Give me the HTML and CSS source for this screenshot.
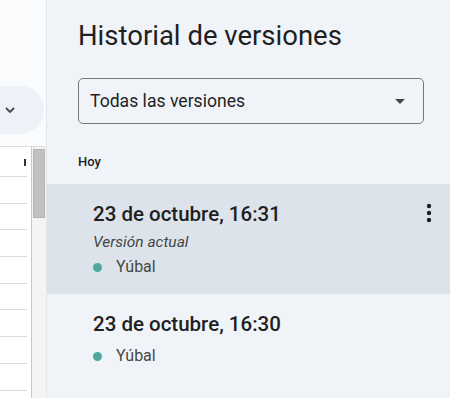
FILE: index.html
```html
<!DOCTYPE html>
<html lang="es">
<head>
    <meta charset="UTF-8">
    <meta name="viewport" content="width=device-width, initial-scale=1.0">
    <title>Historial de versiones</title>
    <link rel="stylesheet" href="styles.css">
</head>
<body>
    <div class="app">
        <!-- Sheet side, mostly cut off -->
        <div class="sheet">
            <div class="sheet-top">
                <div class="pill">
                    <svg class="chevron" width="10" height="7" viewBox="0 0 10 7">
                        <path d="M1 1l4 4 4-4" fill="none" stroke="#444746" stroke-width="1.8"/>
                    </svg>
                </div>
            </div>
            <div class="grid">
                <div class="cells">
                    <div class="cell"><span class="caret"></span></div>
                    <div class="cell"></div>
                    <div class="cell"></div>
                    <div class="cell"></div>
                    <div class="cell"></div>
                    <div class="cell"></div>
                    <div class="cell"></div>
                    <div class="cell"></div>
                    <div class="cell"></div>
                </div>
                <div class="scrollbar">
                    <div class="thumb"></div>
                </div>
            </div>
        </div>

        <!-- Version history panel -->
        <div class="panel">
            <h1>Historial de versiones</h1>
            <div class="select">
                <span>Todas las versiones</span>
                <span class="arrow"></span>
            </div>
            <div class="day">Hoy</div>

            <div class="version current">
                <div class="version-head">
                    <div class="version-date">23 de octubre, 16:31</div>
                    <svg class="kebab" width="6" height="20" viewBox="0 0 6 20">
                        <circle cx="3" cy="3" r="2.2" fill="#1f1f1f"/>
                        <circle cx="3" cy="10" r="2.2" fill="#1f1f1f"/>
                        <circle cx="3" cy="17" r="2.2" fill="#1f1f1f"/>
                    </svg>
                </div>
                <div class="version-label">Versión actual</div>
                <div class="author"><span class="dot"></span>Yúbal</div>
            </div>

            <div class="version">
                <div class="version-head">
                    <div class="version-date">23 de octubre, 16:30</div>
                </div>
                <div class="author spaced"><span class="dot"></span>Yúbal</div>
            </div>
        </div>
    </div>
</body>
</html>
```

FILE: styles.css
```css
body {
    margin: 0;
    font-family: Roboto, "Liberation Sans", Arial, sans-serif;
    color: #1f1f1f;
    overflow: hidden;
}

.app {
    display: flex;
    height: 398px;
}

/* Sheet side */
.sheet {
    width: 46px;
    flex-shrink: 0;
    background: #f9fbfd;
    border-right: 1px solid #e3e6ea;
    overflow: hidden;
}

.sheet-top {
    height: 147px;
    padding-top: 86px;
    box-sizing: border-box;
    border-bottom: 1px solid #dadce0;
}

.pill {
    width: 70px;
    height: 48px;
    margin-left: -26px;
    border-radius: 24px;
    background: #eef2f8;
    display: flex;
    align-items: center;
    padding-left: 31px;
    box-sizing: border-box;
}

.grid {
    display: flex;
    height: 251px;
    background: #fff;
}

.cells {
    width: 31px;
    border-right: 1px solid #c7c7c7;
}

.cell {
    height: 26.7px;
    border-bottom: 1px solid #dadada;
    margin-right: 4px;
    box-sizing: border-box;
    position: relative;
}

.cell:first-child {
    height: 30px;
}

.caret {
    position: absolute;
    left: 24px;
    top: 12px;
    width: 2px;
    height: 7px;
    background: #333;
}

.scrollbar {
    flex: 1;
    background: #f4f4f4;
    padding: 2px 1px 0 1px;
}

.thumb {
    height: 69px;
    background: #c1c1c1;
    border: 1px solid #b4b4b4;
    box-sizing: border-box;
}

/* Panel */
.panel {
    flex: 1;
    background: #f0f4f9;
}

h1 {
    margin: 19px 0 0 31px;
    font-size: 27.5px;
    font-weight: 400;
    line-height: 34px;
    color: #1f1f1f;
}

.select {
    margin: 25px 26px 0 31px;
    height: 46px;
    border: 1px solid #747775;
    border-radius: 5px;
    display: flex;
    align-items: center;
    justify-content: space-between;
    padding: 0 18px 0 11px;
    box-sizing: border-box;
    font-size: 17.6px;
    color: #1f1f1f;
}

.arrow {
    width: 0;
    height: 0;
    border-left: 5px solid transparent;
    border-right: 5px solid transparent;
    border-top: 5px solid #444746;
}

.day {
    margin: 30px 0 0 31px;
    font-size: 13px;
    font-weight: 500;
    color: #1f1f1f;
    height: 30px;
}

.version {
    padding: 17px 18px 15px 46px;
    height: 110px;
    box-sizing: border-box;
}

.version.current {
    background: #dde3ea;
}

.version-head {
    display: flex;
    justify-content: space-between;
    align-items: flex-start;
}

.version-date {
    font-size: 20.5px;
    font-weight: 500;
    line-height: 26px;
}

.kebab {
    margin-top: 2px;
}

.version-label {
    margin-top: 5px;
    font-size: 15.5px;
    font-style: italic;
    color: #444746;
    line-height: 20px;
}

.author {
    margin-top: 5px;
    font-size: 16px;
    color: #444746;
    line-height: 20px;
    display: flex;
    align-items: center;
}

.author.spaced {
    margin-top: 9px;
}

.dot {
    width: 9px;
    height: 9px;
    border-radius: 50%;
    background: #4ea79c;
    margin-right: 14px;
}
```
